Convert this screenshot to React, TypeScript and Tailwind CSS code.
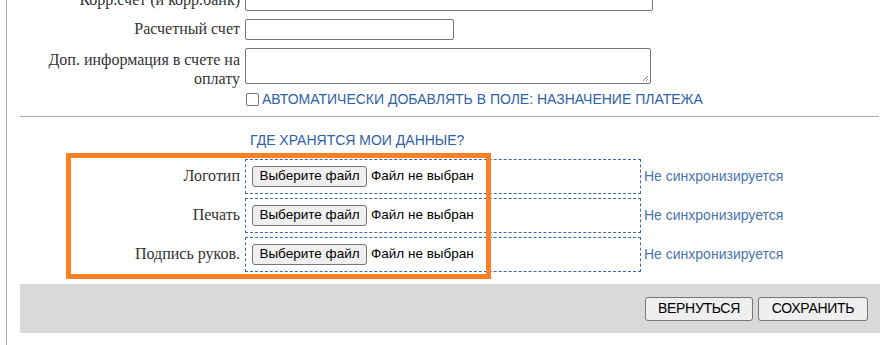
const serif = 'font-["Liberation_Serif","Times_New_Roman",serif]'
const sans = 'font-["Liberation_Sans",Arial,sans-serif]'

function Label({ children, className = '' }: { children: React.ReactNode; className?: string }) {
  return (
    <div className={`w-[233px] shrink-0 text-right text-[16px] leading-[18.5px] text-[#333] ${serif} ${className}`}>
      {children}
    </div>
  )
}

function FileRow({ label }: { label: string }) {
  return (
    <div className="flex items-center h-[35px]">
      <Label>{label}</Label>
      <div className="ml-[5px] w-[396px] h-[35px] border border-dashed border-[#3b6b9f] flex items-center pl-[6px]">
        <span className={`h-[21px] w-[115px] flex items-center justify-center bg-[#efefef] border border-[#767676] rounded-[3px] text-[13.5px] text-black ${sans}`}>
          Выберите файл
        </span>
        <span className={`ml-[4px] text-[13.5px] text-black ${sans}`}>Файл не выбран</span>
      </div>
      <span className={`ml-[3px] text-[14px] text-[#4a75ad] ${sans}`}>Не синхронизируется</span>
    </div>
  )
}

export default function App() {
  return (
    <div className="w-[889px] h-[345px] overflow-hidden bg-white">
      <div className="relative flow-root ml-[6px] h-full border-l border-[#aaa]">
        <div className="mt-[-10px] flex flex-col">
          <div className="flex items-center h-[21px]">
            <Label>Корр.счет (и корр.банк)</Label>
            <div className="ml-[5px] w-[408px] h-[21px] border border-[#767676] rounded-[2px]" />
          </div>
          <div className="flex items-center h-[21px] mt-[8px]">
            <Label>Расчетный счет</Label>
            <div className="ml-[5px] w-[209px] h-[21px] border border-[#767676] rounded-[2px]" />
          </div>
          <div className="flex items-start mt-[8px]">
            <Label className="pt-[3px]">
              Доп. информация в счете на
              <br />
              оплату
            </Label>
            <div className="relative ml-[5px] w-[406px] h-[36px] border border-[#767676] rounded-[2px]">
              <svg className="absolute right-[1px] bottom-[1px]" width="7" height="7" viewBox="0 0 7 7">
                <path d="M6 1 L1 6 M6 4 L4 6" stroke="#888" strokeWidth="1" />
              </svg>
            </div>
          </div>
          <div className="flex items-center mt-[3px] ml-[239px]">
            <span className="w-[13px] h-[13px] border border-[#767676] rounded-[2px] bg-white" />
            <span className={`ml-[3px] text-[14px] leading-[16px] text-[#2f62a3] ${sans}`}>
              АВТОМАТИЧЕСКИ ДОБАВЛЯТЬ В ПОЛЕ: НАЗНАЧЕНИЕ ПЛАТЕЖА
            </span>
          </div>
        </div>

        <div className="ml-[13px] mr-[10px] mt-[9px] border-t border-[#aaa]" />

        <div className={`mt-[15px] ml-[243px] text-[14px] leading-[16px] text-[#2f62a3] ${sans}`}>
          ГДЕ ХРАНЯТСЯ МОИ ДАННЫЕ?
        </div>

        <div className="mt-[11px] flex flex-col gap-[4px]">
          <FileRow label="Логотип" />
          <FileRow label="Печать" />
          <FileRow label="Подпись руков." />
        </div>

        <div className="mt-[12px] ml-[13px] mr-[9px] h-[49px] bg-[#d9d9d9] flex items-center justify-end gap-[5px] pr-[12px]">
          <button className={`h-[24px] w-[108px] bg-[#efefef] border border-[#767676] rounded-[3px] text-[14px] text-black tracking-[-0.3px] ${sans}`}>
            ВЕРНУТЬСЯ
          </button>
          <button className={`h-[24px] w-[110px] bg-[#efefef] border border-[#767676] rounded-[3px] text-[14px] text-black tracking-[-0.3px] ${sans}`}>
            СОХРАНИТЬ
          </button>
        </div>

        <div className="absolute left-[59px] top-[153px] w-[425px] h-[126px] border-[5px] border-[#fd8024] pointer-events-none" />
      </div>
    </div>
  )
}
